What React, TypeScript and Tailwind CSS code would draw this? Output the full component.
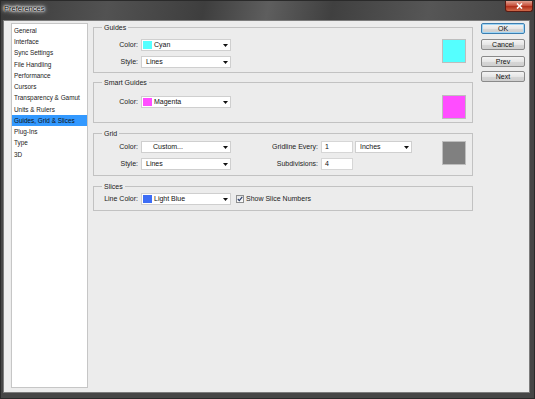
import React from "react";

const font = "font-['Liberation_Sans',Arial,sans-serif]";

function Arrow() {
  return (
    <svg width="5" height="3" viewBox="0 0 5 3" className="shrink-0">
      <path d="M0 0 H5 L2.5 3 Z" fill="#111" />
    </svg>
  );
}

function Select({
  w,
  swatch,
  text,
  indent,
}: {
  w: string;
  swatch?: string;
  text: string;
  indent?: boolean;
}) {
  return (
    <div
      className={`${w} h-[12px] bg-white border border-[#cfcfcf] flex items-center pl-[1px] pr-[2px]`}
    >
      {swatch ? (
        <span className="w-[9px] h-[8px] shrink-0 mr-[2px]" style={{ background: swatch }} />
      ) : null}
      <span className={`flex-1 text-[7px] leading-[10px] text-[#111] ${swatch ? "" : indent ? "pl-[10px]" : "pl-[3px]"}`}>
        {text}
      </span>
      <Arrow />
    </div>
  );
}

function Label({ children, w = "w-[47px]" }: { children: React.ReactNode; w?: string }) {
  return (
    <span className={`${w} shrink-0 text-right pr-[3px] text-[7px] leading-[12px] text-[#222]`}>{children}</span>
  );
}

function Swatch({ color }: { color: string }) {
  return <div className="w-[24px] h-[24px] border border-[#bdbdbd]" style={{ background: color }} />;
}

function Group({
  title,
  className,
  children,
}: {
  title: string;
  className: string;
  children: React.ReactNode;
}) {
  return (
    <fieldset className={`border border-[#c2c2c2] ${className}`}>
      <legend className="ml-[8px] px-[2px] text-[7px] leading-[9px] text-[#222]">{title}</legend>
      {children}
    </fieldset>
  );
}

function Btn({ children, def, className = "" }: { children: React.ReactNode; def?: boolean; className?: string }) {
  return (
    <div
      className={`h-[11px] w-[44px] rounded-[2px] border ${
        def ? "border-[#3c7fb1] shadow-[inset_0_0_0_1px_#9fd5f5]" : "border-[#8a8a8a]"
      } bg-[linear-gradient(#f4f4f4,#e6e6e6_50%,#d6d6d6_51%,#cfcfcf)] flex items-center justify-center text-[7px] leading-[9px] text-[#111] ${className}`}
    >
      {children}
    </div>
  );
}

const items = [
  "General",
  "Interface",
  "Sync Settings",
  "File Handling",
  "Performance",
  "Cursors",
  "Transparency & Gamut",
  "Units & Rulers",
  "Guides, Grid & Slices",
  "Plug-Ins",
  "Type",
  "3D",
];

export default function App() {
  return (
    <div
      className={`w-[535px] h-[399px] flex flex-col bg-[#464646] border border-[#2a2a2a] ${font}`}
    >
      {/* title bar */}
      <div className="h-[19px] shrink-0 flex items-start bg-[linear-gradient(100deg,#3a3a3a_0%,#525252_20%,#3e3e3e_38%,#5e5e5e_50%,#404040_62%,#565656_80%,#424242_100%)]">
        <span className="ml-[2px] mt-[3px] px-[1px] text-[7.5px] leading-[9px] text-black [text-shadow:0_0_1px_#fff,0_0_2px_#fff,0_0_3px_#fff,0_0_4px_#fff,0_0_6px_#fff]">
          Preferences
        </span>
        <div className="ml-auto mr-[1px] w-[28px] h-[11px] rounded-b-[3px] border border-t-0 border-[#5a1a12] bg-[linear-gradient(#e0a090,#c8533f_45%,#b0301c_55%,#d06a4a)] flex items-center justify-center">
          <svg width="7" height="6" viewBox="0 0 7 6">
            <path d="M1 0.5 L6 5.5 M6 0.5 L1 5.5" stroke="#fff" strokeWidth="1.6" />
          </svg>
        </div>
      </div>
      {/* body */}
      <div className="flex-1 ml-[2px] mr-[4px] mb-[5px] border border-[#7c7c7c] bg-[#ececec] flex pl-[7px] pr-[5px] pt-[2px] pb-[4px]">
        {/* list */}
        <div className="w-[77px] h-full bg-white border border-[#c6c6c6] pt-[1px] flex flex-col shrink-0">
          {items.map((it) => (
            <div
              key={it}
              className={`h-[11.27px] flex items-center pl-[2px] text-[6.4px] whitespace-nowrap ${
                it === "Guides, Grid & Slices" ? "bg-[#3399ff] text-[#111]" : "text-[#222]"
              }`}
            >
              {it}
            </div>
          ))}
        </div>
        {/* groups */}
        <div className="w-[380px] ml-[5px] flex flex-col shrink-0">
          <Group title="Guides" className="pt-[7px] pb-[4px] pr-[6px]">
            <div className="flex">
              <div className="flex-1 flex flex-col gap-[5px]">
                <div className="flex items-center">
                  <Label>Color:</Label>
                  <Select w="w-[90px]" swatch="#55ffff" text="Cyan" />
                </div>
                <div className="flex items-center">
                  <Label>Style:</Label>
                  <Select w="w-[90px]" text="Lines" />
                </div>
              </div>
              <Swatch color="#55ffff" />
            </div>
          </Group>
          <Group title="Smart Guides" className="mt-[5px] pt-[8px] pb-[3px] pr-[6px]">
            <div className="flex">
              <div className="flex-1 flex items-start pt-[1px]">
                <Label>Color:</Label>
                <Select w="w-[90px]" swatch="#ff4dff" text="Magenta" />
              </div>
              <Swatch color="#ff4dff" />
            </div>
          </Group>
          <Group title="Grid" className="mt-[6px] pt-[3px] pb-[5px] pr-[6px]">
            <div className="flex">
              <div className="flex-1 flex flex-col gap-[5px]">
                <div className="flex items-center">
                  <Label>Color:</Label>
                  <Select w="w-[90px]" text="Custom..." indent />
                  <Label w="w-[90px]">Gridline Every:</Label>
                  <div className="w-[32px] h-[12px] bg-white border border-[#d6d6d6] text-[7px] leading-[10px] pl-[3px] text-[#111]">1</div>
                  <div className="ml-[2px]">
                    <Select w="w-[57px]" text="Inches" />
                  </div>
                </div>
                <div className="flex items-center">
                  <Label>Style:</Label>
                  <Select w="w-[90px]" text="Lines" />
                  <Label w="w-[90px]">Subdivisions:</Label>
                  <div className="w-[32px] h-[12px] bg-white border border-[#d6d6d6] text-[7px] leading-[10px] pl-[3px] text-[#111]">4</div>
                </div>
              </div>
              <Swatch color="#808080" />
            </div>
          </Group>
          <Group title="Slices" className="mt-[6px] pt-[2px] pb-[5px] pr-[6px]">
            <div className="flex items-center">
              <Label>Line Color:</Label>
              <Select w="w-[90px]" swatch="#3d6df5" text="Light Blue" />
              <div className="ml-[5px] w-[8px] h-[8px] border border-[#8e8f8f] bg-[linear-gradient(#e6e6e6,#fafafa)] flex items-center justify-center">
                <svg width="6" height="6" viewBox="0 0 6 6">
                  <path d="M0.8 3 L2.3 4.6 L5.3 0.8" stroke="#2a3d6a" strokeWidth="1.1" fill="none" />
                </svg>
              </div>
              <span className="ml-[2px] text-[7px] leading-[10px] text-[#222]">Show Slice Numbers</span>
            </div>
          </Group>
        </div>
        {/* buttons */}
        <div className="ml-[8px] flex flex-col">
          <Btn def>OK</Btn>
          <Btn className="mt-[5px]">Cancel</Btn>
          <Btn className="mt-[6px]">Prev</Btn>
          <Btn className="mt-[4px]">Next</Btn>
        </div>
      </div>
    </div>
  );
}
